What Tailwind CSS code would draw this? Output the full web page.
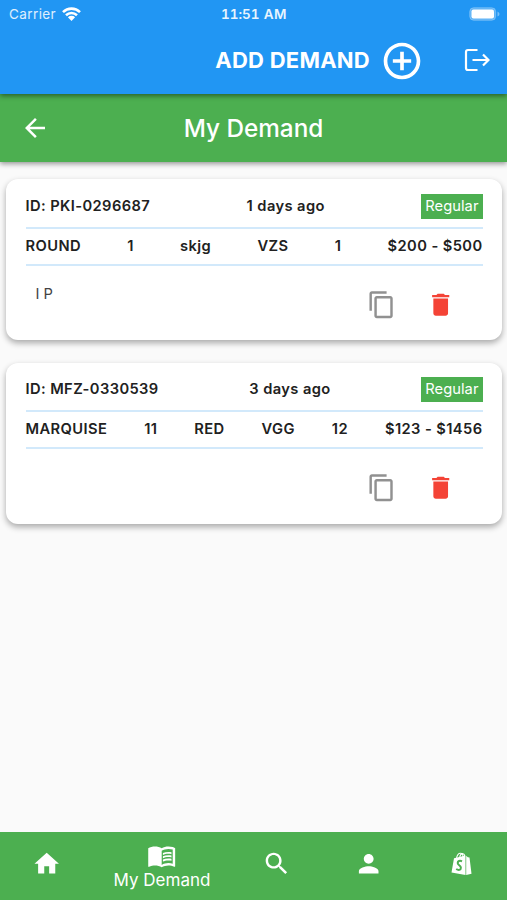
<!DOCTYPE html>
<html lang="en">
<head>
<meta charset="utf-8">
<meta name="viewport" content="width=device-width, initial-scale=1">
<title>My Demand</title>
<script src="https://cdn.jsdelivr.net/npm/@tailwindcss/browser@4"></script>
</head>
<body class="bg-[#fafafa]">
<svg class="hidden">
  <symbol id="copy" viewBox="0 0 24 24"><path d="M16 1H4c-1.1 0-2 .9-2 2v14h2V3h12V1zm3 4H8c-1.1 0-2 .9-2 2v14c0 1.1.9 2 2 2h11c1.1 0 2-.9 2-2V7c0-1.1-.9-2-2-2zm0 16H8V7h11v14z"/></symbol>
  <symbol id="trash" viewBox="0 0 24 24"><path d="M6 19c0 1.1.9 2 2 2h8c1.1 0 2-.9 2-2V7H6v12zM19 4h-3.5l-1-1h-5l-1 1H5v2h14V4z"/></symbol>
</svg>
<div class="flex h-[900px] w-[507px] flex-col overflow-hidden font-['Inter','Liberation_Sans',sans-serif] text-[14.7px] text-[#212121]">
  <header class="relative z-20 h-[94px] shrink-0 bg-[#2196f3] text-white shadow-[0_2px_5px_rgba(0,0,0,0.45)]">
    <div class="grid h-[27px] grid-cols-3 items-center pl-[9px] pr-[7px] text-[13.5px] leading-[27px]">
      <div class="flex items-center gap-[6px] pt-px text-white/85"><span class="tracking-[0.4px]">Carrier</span>
        <svg class="-mt-[2px] h-[14px] w-[19px] fill-none stroke-white" viewBox="0 0 19 14"><path stroke-width="2.6" d="M1 5.1a12.2 12.2 0 0 1 17 0M4 8.2a8 8 0 0 1 11 0"/><path class="fill-white stroke-none" d="M5.9 10.2a5.2 5.2 0 0 1 7.2 0L9.500 13.900z"/></svg>
      </div>
      <div class="pt-px pr-px text-center font-semibold tracking-[0.55px] text-white/90 [font-feature-settings:'calt'_0] [font-variant-numeric:tabular-nums] whitespace-nowrap"><span class="tracking-[0px]">11:51</span> AM</div>
      <svg class="-mt-px h-[14px] w-[31px] justify-self-end" viewBox="0 0 31 14"><rect x=".7" y=".7" width="26" height="12.600" rx="4" fill="#fff" fill-opacity=".28" stroke="#fff" stroke-opacity=".25"/><rect x="2.500" y="2.500" width="22.500" height="9" rx="2" fill="#fff"/><path d="M28.500 4.500v5q2-1 2-2.500t-2-2.500" fill="#fff" fill-opacity=".4"/></svg>
    </div>
    <div class="flex h-[67px] items-center justify-end pr-[17px]">
      <span class="text-[22px] font-bold tracking-[0.25px]">ADD DEMAND</span>
      <svg class="mr-[40px] ml-[10px] mt-[1px] size-[44px] fill-white" viewBox="0 0 24 24"><path d="M13 7h-2v4H7v2h4v4h2v-4h4v-2h-4V7zm-1-5C6.480 2 2 6.480 2 12s4.480 10 10 10 10-4.480 10-10S17.520 2 12 2zm0 18c-4.410 0-8-3.590-8-8s3.590-8 8-8 8 3.590 8 8-3.590 8-8 8z"/></svg>
      <svg class="-mt-[2px] h-[24px] w-[26px] fill-none stroke-white stroke-[2.2]" viewBox="0 0 26 24"><path d="M13.500 2H4Q2 2 2 4V20Q2 22 4 22H13.500M8.500 12H24.500M19 6.500L24.500 12L19 17.500"/></svg>
    </div>
  </header>
  <div class="relative z-10 grid h-[68px] shrink-0 grid-cols-[1fr_auto_1fr] items-center bg-[#4caf50] px-[20px] text-white shadow-[0_2px_5px_rgba(0,0,0,0.4)]">
    <svg class="size-[30px] fill-white" viewBox="0 0 24 24"><path d="M20 11H7.830l5.590-5.590L12 4l-8 8 8 8 1.410-1.410L7.830 13H20v-2z"/></svg>
    <h1 class="text-[24.3px] font-medium">My Demand</h1>
  </div>

  <main class="flex flex-1 flex-col gap-[23px] pt-[17px] pr-[5px] pl-[6px]">
    <article class="h-[161px] rounded-[12px] bg-white px-[19.500px] pt-[15px] shadow-[0_3px_6px_rgba(0,0,0,0.33)]">
      <div class="flex h-[35px] items-start justify-between border-b-2 border-[#d2e9fb] font-semibold leading-[25px] tracking-[0.4px]">
        <span>ID: PKI-0296687</span><span>1 days ago</span><span class="bg-[#4caf50] px-[4px] font-normal tracking-[0.05px] text-white">Regular</span>
      </div>
      <div class="flex h-[37px] items-center justify-between border-b-2 border-[#d2e9fb] font-semibold tracking-[0.4px]">
        <span>ROUND</span><span>1</span><span>skjg</span><span>VZS</span><span>1</span><span>$200 - $500</span>
      </div>
      <div class="flex justify-between pt-[17px] pr-[27px] pl-[10px]">
        <p class="text-[#424242]">I P</p>
        <div class="flex gap-[29.500px] pt-[7px]"><svg class="size-[29.400px] fill-[#919191]"><use href="#copy"/></svg><svg class="size-[29.400px] fill-[#f44336]"><use href="#trash"/></svg></div>
      </div>
    </article>
    <article class="h-[161px] rounded-[12px] bg-white px-[19.500px] pt-[14px] shadow-[0_3px_6px_rgba(0,0,0,0.33)]">
      <div class="flex h-[35px] items-start justify-between border-b-2 border-[#d2e9fb] font-semibold leading-[25px] tracking-[0.4px]">
        <span>ID: MFZ-0330539</span><span>3 days ago</span><span class="bg-[#4caf50] px-[4px] font-normal tracking-[0.05px] text-white">Regular</span>
      </div>
      <div class="flex h-[37px] items-center justify-between border-b-2 border-[#d2e9fb] font-semibold tracking-[0.4px]">
        <span>MARQUISE</span><span>11</span><span>RED</span><span>VGG</span><span>12</span><span>$123 - $1456</span>
      </div>
      <div class="flex justify-end pt-[17px] pr-[27px] pl-[10px]">
        <div class="flex gap-[29.500px] pt-[7px]"><svg class="size-[29.400px] fill-[#919191]"><use href="#copy"/></svg><svg class="size-[29.400px] fill-[#f44336]"><use href="#trash"/></svg></div>
      </div>
    </article>
  </main>

  <nav class="grid h-[68.500px] shrink-0 grid-cols-[2fr_3fr_2fr_2fr_2fr] items-center justify-items-center bg-[#4caf50] pb-[4px] pl-px text-white">
    <svg class="size-[29.400px] fill-white" viewBox="0 0 24 24"><path d="M10 20v-6h4v6h5v-8h3L12 3 2 12h3v8z"/></svg>
    <div class="flex flex-col items-center pt-[4px]">
      <svg class="size-[29.400px] fill-white" viewBox="0 0 24 24"><path fill-rule="evenodd" d="M21 5c-1.110-.350-2.330-.500-3.500-.500-1.950 0-4.050.400-5.500 1.500-1.450-1.100-3.550-1.500-5.500-1.500S2.450 4.900 1 6v14.650c0 .250.250.500.500.500.100 0 .150-.050.250-.050C3.100 20.450 5.050 20 6.500 20c1.950 0 4.050.400 5.500 1.500 1.350-.850 3.800-1.500 5.500-1.500 1.650 0 3.350.300 4.750 1.050.100.050.150.050.250.050.250 0 .500-.250.500-.500V6c-.600-.450-1.250-.750-2-1zm0 13.500c-1.100-.350-2.300-.500-3.500-.500-1.700 0-4.150.650-5.500 1.500V8c1.350-.850 3.800-1.500 5.500-1.500 1.200 0 2.400.150 3.500.500v11.500z"/><path d="M17.500 10.500c.880 0 1.730.090 2.500.260V9.240c-.790-.150-1.640-.240-2.500-.240-1.700 0-3.240.290-4.500.830v1.660c1.130-.640 2.700-.990 4.500-.990zM13 12.490v1.660c1.130-.640 2.700-.990 4.500-.990.880 0 1.730.090 2.500.260V11.900c-.790-.150-1.640-.240-2.500-.240-1.700 0-3.240.300-4.500.830zM17.500 14.330c-1.700 0-3.240.290-4.500.830v1.660c1.130-.640 2.700-.990 4.500-.990.880 0 1.730.090 2.500.260v-1.520c-.790-.160-1.640-.240-2.500-.240z"/></svg>
      <span class="text-[17px] leading-[20px]">My Demand</span>
    </div>
    <svg class="size-[29.400px] fill-white" viewBox="0 0 24 24"><path d="M15.500 14h-.790l-.280-.270C15.410 12.590 16 11.110 16 9.500 16 5.910 13.090 3 9.500 3S3 5.910 3 9.500 5.910 16 9.500 16c1.610 0 3.090-.590 4.230-1.570l.270.280v.790l5 4.990L20.490 19l-4.990-5zm-6 0C7.010 14 5 11.990 5 9.500S7.010 5 9.500 5 14 7.010 14 9.500 11.990 14 9.500 14z"/></svg>
    <svg class="size-[29.400px] fill-white" viewBox="0 0 24 24"><path d="M12 12c2.210 0 4-1.790 4-4s-1.790-4-4-4-4 1.790-4 4 1.790 4 4 4zm0 2c-2.670 0-8 1.340-8 4v2h16v-2c0-2.660-5.330-4-8-4z"/></svg>
    <svg class="h-[24px] w-[21px] fill-none" viewBox="0 0 21 24"><path fill="#fff" d="M3 6.200L14.500 3.500V23L.500 20.400zM15.200 3.700L16.800 5.200L18.500 5.400L20.500 21.700L15.200 23z"/><path stroke="#fff" stroke-width="1.100" d="M5.500 6.500C6 3.200 8 1.200 9.500 1.200S12 3 12 5M8.800 5C9.200 2.700 10.800 1.500 12 1.700S13.600 3 13.700 4"/><path stroke="#4caf50" stroke-width="2" d="M11 9.300C8.800 8.200 6.700 9.100 6.700 11C6.700 13.300 9.900 13.200 9.900 15.800C9.900 18.100 7.500 18.600 5.200 17"/></svg>
  </nav>
</div>
</body>
</html>
